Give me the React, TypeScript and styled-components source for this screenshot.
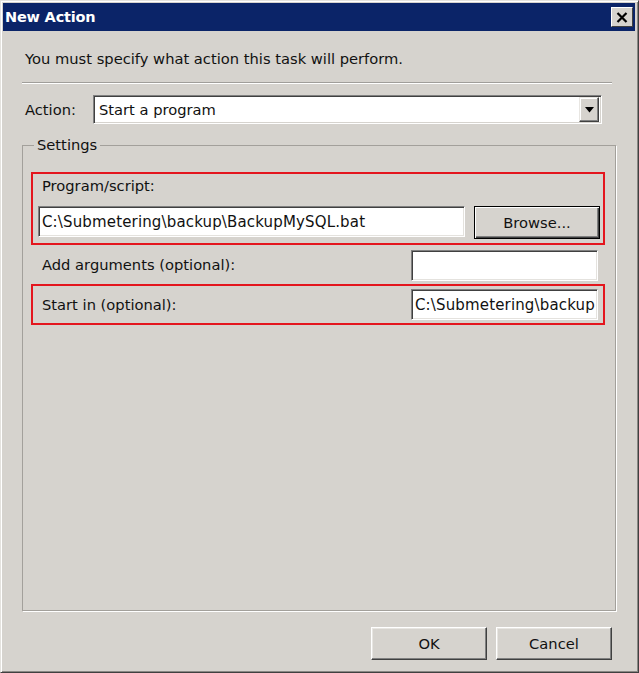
import React from "react";
import styled, { createGlobalStyle } from "styled-components";

const Global = createGlobalStyle`
  html, body { margin: 0; padding: 0; background: #d6d3ce; }
  body { font-family: "DejaVu Sans", "Liberation Sans", sans-serif; }
  * { box-sizing: border-box; }
`;

const Window = styled.div`
  width: 639px;
  height: 673px;
  background: #d6d3ce;
  border: 1px solid;
  border-color: #e4e2de #404040 #404040 #e4e2de;
  box-shadow: inset 1px 1px 0 #ffffff, inset -1px -1px 0 #8a8884;
  padding: 2px 3px 0 2px;
  display: flex;
  flex-direction: column;
  font-size: 14.7px;
  color: #111;
`;

const TitleBar = styled.div`
  height: 28px;
  background: #0b2468;
  display: flex;
  align-items: center;
  justify-content: space-between;
  padding: 0 2px 0 2px;
`;

const TitleText = styled.span`
  color: #fff;
  font-weight: bold;
  font-size: 14.5px;
  letter-spacing: -0.2px;
`;

const CloseButton = styled.div`
  width: 22px;
  height: 20px;
  background: #d6d3ce;
  border: 1px solid;
  border-color: #ffffff #404040 #404040 #ffffff;
  display: flex;
  align-items: center;
  justify-content: center;
`;

const Content = styled.div`
  flex: 1;
  display: flex;
  flex-direction: column;
  padding: 0 19px 12px 19px;
`;

const Intro = styled.div`
  margin-top: 19px;
  padding-left: 3px;
  line-height: 18px;
  height: 18px;
`;

const Separator = styled.div`
  margin-top: 14px;
  margin-right: 4px;
  height: 2px;
  border-top: 1px solid #a09e9a;
  border-bottom: 1px solid #ffffff;
`;

const ActionRow = styled.div`
  margin-top: 11px;
  display: flex;
  align-items: center;
  height: 29px;
`;

const ActionLabel = styled.span`
  width: 71px;
  padding-left: 3px;
`;

const Combo = styled.div`
  width: 509px;
  height: 29px;
  background: #fff;
  border: 1px solid;
  border-color: #808080 #ffffff #ffffff #808080;
  box-shadow: inset 1px 1px 0 #404040, inset -1px -1px 0 #d6d3ce;
  display: flex;
  align-items: center;
  justify-content: space-between;
  padding: 2px 2px 2px 5px;
`;

const ComboArrow = styled.div`
  width: 20px;
  height: 25px;
  background: #d6d3ce;
  border: 1px solid;
  border-color: #e8e6e2 #404040 #404040 #e8e6e2;
  box-shadow: inset -1px -1px 0 #808080, inset 1px 1px 0 #ffffff;
  display: flex;
  align-items: center;
  justify-content: center;
`;

const Group = styled.fieldset`
  margin: 12px 0 0 0;
  flex: 1;
  border: 1px solid #a3a09b;
  box-shadow: 1px 1px 0 #ffffff;
  padding: 0 8px;
  min-width: 0;
  display: flex;
  flex-direction: column;
`;

const Legend = styled.legend`
  margin-left: 3px;
  padding: 0 3px;
  line-height: 18px;
`;

const Highlight = styled.div`
  width: 574px;
  border: 2px solid #e4161e;
  display: flex;
  flex-direction: column;
`;

const ProgramBox = styled(Highlight)`
  margin-top: 18px;
  height: 73px;
  padding: 3px 3px 0 5px;
`;

const StartBox = styled(Highlight)`
  margin-top: 5px;
  height: 41px;
  flex-direction: row;
  align-items: center;
  justify-content: space-between;
  padding: 0 5px 0 9px;
`;

const FieldLabel = styled.div<{ $indent?: number }>`
  line-height: 18px;
  padding-left: ${(p) => p.$indent ?? 0}px;
`;

const InputRow = styled.div`
  margin-top: 11px;
  display: flex;
  align-items: flex-start;
  gap: 9px;
`;

const TextInput = styled.div<{ $w: number }>`
  width: ${(p) => p.$w}px;
  height: 31px;
  background: #fff;
  border: 1px solid;
  border-color: #808080 #ffffff #ffffff #808080;
  box-shadow: inset 1px 1px 0 #404040, inset -1px -1px 0 #e4e2de;
  display: flex;
  align-items: center;
  padding-left: 3px;
  white-space: nowrap;
  overflow: hidden;
  font-size: 15px;
  letter-spacing: 0.15px;
`;

const ArgsRow = styled.div`
  margin-top: 4px;
  width: 574px;
  display: flex;
  align-items: center;
  justify-content: space-between;
  padding: 2px 7px 0 11px;
  height: 30px;
`;

const Button = styled.div<{ $w: number; $default?: boolean }>`
  width: ${(p) => p.$w}px;
  height: 33px;
  background: #d6d3ce;
  border: 1px solid;
  border-color: ${(p) => (p.$default ? "#000" : "#ffffff #404040 #404040 #ffffff")};
  box-shadow: ${(p) =>
    p.$default
      ? "inset 1px 1px 0 #ffffff, inset -1px -1px 0 #404040, inset -2px -2px 0 #808080"
      : "inset -1px -1px 0 #808080, inset 1px 1px 0 #e8e6e2"};
  display: flex;
  align-items: center;
  justify-content: center;
`;

const Footer = styled.div`
  margin-top: 16px;
  display: flex;
  justify-content: flex-end;
  gap: 9px;
  padding-right: 4px;
`;

export default function App() {
  return (
    <>
      <Global />
      <Window>
        <TitleBar>
          <TitleText>New Action</TitleText>
          <CloseButton>
            <svg width="12" height="11" viewBox="0 0 12 11">
              <path d="M1.5 1 L10.5 10 M10.5 1 L1.5 10" stroke="#000" strokeWidth="2.2" />
            </svg>
          </CloseButton>
        </TitleBar>
        <Content>
          <Intro>You must specify what action this task will perform.</Intro>
          <Separator />
          <ActionRow>
            <ActionLabel>Action:</ActionLabel>
            <Combo>
              <span>Start a program</span>
              <ComboArrow>
                <svg width="9" height="6" viewBox="0 0 9 6">
                  <path d="M0 0 H9 L4.5 5.5 Z" fill="#000" />
                </svg>
              </ComboArrow>
            </Combo>
          </ActionRow>
          <Group>
            <Legend>Settings</Legend>
            <ProgramBox>
              <FieldLabel $indent={4}>Program/script:</FieldLabel>
              <InputRow>
                <TextInput $w={427}>C:\Submetering\backup\BackupMySQL.bat</TextInput>
                <Button $w={126} $default>Browse...</Button>
              </InputRow>
            </ProgramBox>
            <ArgsRow>
              <FieldLabel>Add arguments (optional):</FieldLabel>
              <TextInput $w={187} />
            </ArgsRow>
            <StartBox>
              <FieldLabel>Start in (optional):</FieldLabel>
              <TextInput $w={187}>C:\Submetering\backup</TextInput>
            </StartBox>
          </Group>
          <Footer>
            <Button $w={116}>OK</Button>
            <Button $w={116}>Cancel</Button>
          </Footer>
        </Content>
      </Window>
    </>
  );
}
